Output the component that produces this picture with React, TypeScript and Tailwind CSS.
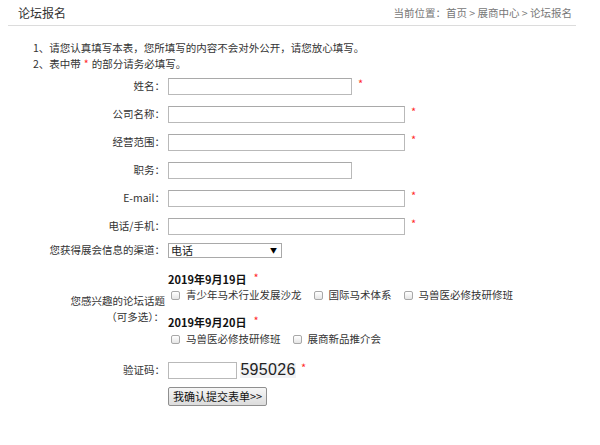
import React from "react";

const font = { fontFamily: '"Microsoft YaHei", "Noto Sans CJK SC", "Liberation Sans", sans-serif' };

function Star() {
  return <span className="text-[#ff2a2a] text-[11px] leading-none ml-[6px] relative -top-[3px]">*</span>;
}

function Row({ label, wide, required }: { label: string; wide?: boolean; required?: boolean }) {
  return (
    <div className="flex items-center h-[28px]">
      <div className="w-[165px] text-right text-[#333]">{label}：</div>
      <input
        className={`ml-[3px] h-[17px] border border-[#b9b9b9] border-t-[#a9a9a9] bg-white outline-none ${wide ? "w-[237px]" : "w-[184px]"}`}
      />
      {required && <Star />}
    </div>
  );
}

function Check({ text }: { text: string }) {
  return (
    <label className="flex items-center mr-[9px] text-[#333]">
      <span className="w-[9px] h-[9px] border border-[#a8a8a8] rounded-[2px] bg-gradient-to-b from-white to-[#e6e6e6] ml-[3px] mr-[6px]" />
      {text}
    </label>
  );
}

export default function App() {
  return (
    <div className="w-[600px] h-[445px] bg-white text-[10.5px] leading-[16px]" style={font}>
      <div className="ml-[8px] w-[568px]">
        <div className="flex items-center justify-between h-[26px] border-b border-[#dcdcdc] pl-[10px] pr-[4px]">
          <span className="text-[12px] text-[#333]">论坛报名</span>
          <span className="text-[#777]">当前位置：首页 &gt; 展商中心 &gt; 论坛报名</span>
        </div>

        <div className="pt-[14px] pl-[25px] text-[#333]">
          <p>1、请您认真填写本表，您所填写的内容不会对外公开，请您放心填写。</p>
          <p>
            2、表中带<span className="text-[#ff2a2a] mx-[3px]">*</span>的部分请务必填写。
          </p>
        </div>
      </div>

      <Row label="姓名" required />
      <Row label="公司名称" wide required />
      <Row label="经营范围" wide required />
      <Row label="职务" />
      <Row label="E-mail" wide required />
      <Row label="电话/手机" wide required />

      <div className="flex items-center h-[20px]">
        <div className="w-[165px] text-right text-[#333]">您获得展会信息的渠道：</div>
        <div className="ml-[3px] w-[114px] h-[15px] border border-[#a9a9a9] bg-white flex items-center justify-between pl-[2px] pr-[4px]">
          <span className="text-[#222] text-[11px] leading-[13px]">电话</span>
          <span className="text-[7px] text-black leading-none">▼</span>
        </div>
      </div>

      <div className="flex items-center pt-[11px] pb-[13px]">
        <div className="w-[165px] text-right text-[#333]">
          <div>您感兴趣的论坛话题</div>
          <div className="pr-[1px]">（可多选）：</div>
        </div>
        <div className="ml-[3px]">
          <div className="font-bold text-[11px] text-[#111] flex items-center">
            2019年9月19日<span className="text-[#ff2a2a] font-normal text-[11px] ml-[7px] relative -top-[2px]">*</span>
          </div>
          <div className="flex items-center">
            <Check text="青少年马术行业发展沙龙" />
            <Check text="国际马术体系" />
            <Check text="马兽医必修技研修班" />
          </div>
          <div className="font-bold text-[11px] text-[#111] flex items-center mt-[11px]">
            2019年9月20日<span className="text-[#ff2a2a] font-normal text-[11px] ml-[7px] relative -top-[2px]">*</span>
          </div>
          <div className="flex items-center mt-[1px]">
            <Check text="马兽医必修技研修班" />
            <Check text="展商新品推介会" />
          </div>
        </div>
      </div>

      <div className="flex items-center h-[20px]">
        <div className="w-[165px] text-right text-[#333]">验证码：</div>
        <input className="ml-[3px] w-[69px] h-[17px] border border-[#b9b9b9] bg-white outline-none" />
        <span
          className="ml-[3px] w-[56px] h-[15px] bg-[#f1f2f4] flex items-center justify-center text-[16px] text-[#222] tracking-[0.3px]"
          style={{ fontFamily: '"Liberation Sans", sans-serif' }}
        >
          595026
        </span>
        <span className="text-[#ff2a2a] text-[11px] ml-[5px] relative -top-[3px]">*</span>
      </div>

      <div className="pl-[168px] mt-[7px]">
        <button className="h-[19px] px-[4px] whitespace-nowrap border border-[#8f8f8f] rounded-[2px] bg-gradient-to-b from-[#f6f6f6] to-[#dcdcdc] text-[11px] text-[#111] leading-none">
          我确认提交表单&gt;&gt;
        </button>
      </div>
    </div>
  );
}
